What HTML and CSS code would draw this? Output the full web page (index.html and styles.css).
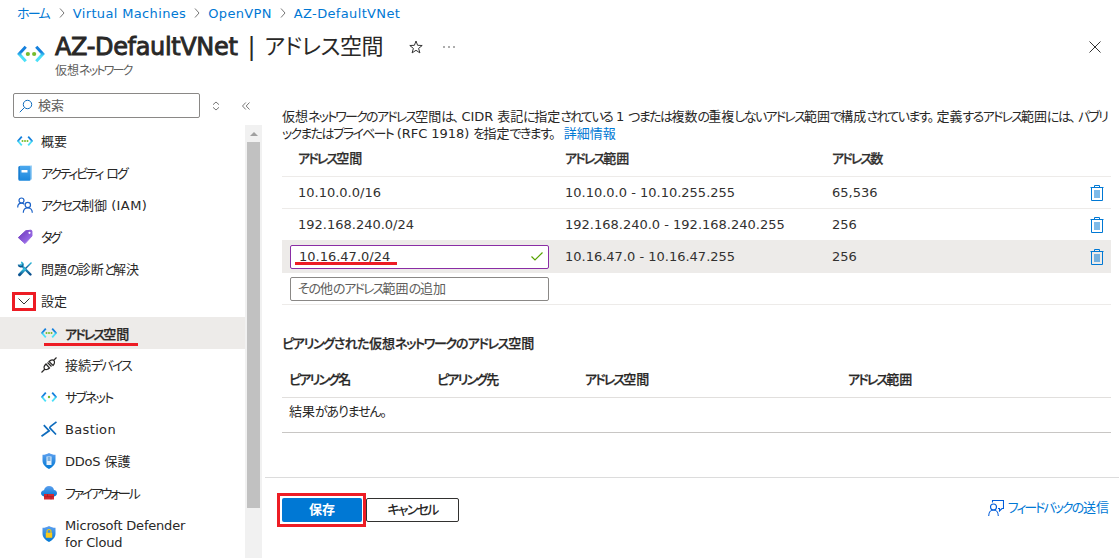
FILE: index.html
```html
<!DOCTYPE html>
<html lang="ja">

<head>
    <meta charset="UTF-8">
    <meta name="viewport" content="width=device-width, initial-scale=1">
    <title>AZ-DefaultVNet | アドレス空間</title>
    <link rel="stylesheet" href="styles.css">
</head>

<body>
    <svg class="defs" width="0" height="0">
        <defs>
            <linearGradient id="g-arrow" x1="0" y1="0" x2="0" y2="1">
                <stop offset="0.35" stop-color="#1580dd"/>
                <stop offset="0.65" stop-color="#4be0f8"/>
            </linearGradient>
            <linearGradient id="g-blue" x1="0" y1="0" x2="0" y2="1">
                <stop offset="0" stop-color="#5ea0ef"/>
                <stop offset="1" stop-color="#0078d4"/>
            </linearGradient>
            <linearGradient id="g-book" x1="0" y1="0" x2="0" y2="1">
                <stop offset="0" stop-color="#4ba8ee"/>
                <stop offset="1" stop-color="#1b87dc"/>
            </linearGradient>
            <linearGradient id="g-tool" x1="0" y1="0" x2="0" y2="1">
                <stop offset="0" stop-color="#32bedd"/>
                <stop offset="1" stop-color="#0a4e8c"/>
            </linearGradient>
            <linearGradient id="g-tag" x1="0" y1="0" x2="1" y2="1">
                <stop offset="0" stop-color="#6b35b8"/>
                <stop offset="1" stop-color="#a67af4"/>
            </linearGradient>
            <symbol id="i-vnet" viewBox="0 0 16 16">
                <path d="M4.800 3.600L1 8l3.800 4.400M11.200 3.600L15 8l-3.800 4.400" fill="none" stroke="url(#g-arrow)" stroke-width="1.800"/>
                <circle cx="5.500" cy="8" r="1" fill="#76bc2d"/>
                <circle cx="8" cy="8" r="1" fill="#76bc2d"/>
                <circle cx="10.500" cy="8" r="1" fill="#76bc2d"/>
            </symbol>
            <symbol id="i-vnet2" viewBox="0 0 16 16">
                <path d="M5 3.800L1.200 8 5 12.200M11 3.800L14.800 8 11 12.200" fill="none" stroke="url(#g-arrow)" stroke-width="1.700"/>
                <circle cx="6.200" cy="8" r="1.200" fill="#76bc2d"/>
                <circle cx="9.800" cy="8" r="1.200" fill="#76bc2d"/>
            </symbol>
            <symbol id="i-subnet" viewBox="0 0 16 16">
                <path d="M4.800 3.600L1 8l3.800 4.400M11.200 3.600L15 8l-3.800 4.400" fill="none" stroke="url(#g-arrow)" stroke-width="1.800"/>
                <circle cx="8" cy="8" r="1.200" fill="#76bc2d"/>
            </symbol>
            <symbol id="i-trash" viewBox="0 0 14 16">
                <path d="M0.5 2.500h13M4.500 2.500v-2h5v2M1.500 2.500v13h11v-13" fill="none" stroke="#0078d4"/>
                <path d="M4 5h6v8H4z" fill="#0078d4" opacity="0.5"/>
            </symbol>
        </defs>
    </svg>

    <header>
        <nav class="breadcrumb">
            <a href="#" class="home"><span class="kana">ホーム</span></a>
            <svg width="6" height="10" viewBox="0 0 6 10"><path d="M1 .5L5 5 1 9.500"/></svg>
            <a href="#" class="wide">Virtual Machines</a>
            <svg width="6" height="10" viewBox="0 0 6 10"><path d="M1 .5L5 5 1 9.500"/></svg>
            <a href="#" class="wide">OpenVPN</a>
            <svg width="6" height="10" viewBox="0 0 6 10"><path d="M1 .5L5 5 1 9.500"/></svg>
            <a href="#" class="wide">AZ-DefaultVNet</a>
        </nav>
        <div class="title-bar">
            <svg class="logo" width="28" height="28"><use href="#i-vnet2"/></svg>
            <div>
                <h1><strong>AZ-DefaultVNet</strong><span class="bar">|</span><span class="blade">アドレス空間</span></h1>
                <p class="kind">仮想<span class="kana">ネットワーク</span></p>
            </div>
            <svg class="star" width="14" height="14" viewBox="0 0 14 14"><path d="M7 1l1.600 4.300 4.600.2-3.600 2.900 1.300 4.500L7 10.300l-3.900 2.600 1.300-4.500L.8 5.500l4.600-.2z"/></svg>
            <svg class="more" width="12" height="4" viewBox="0 0 12 4"><circle cx="1" cy="2" r=".8"/><circle cx="6" cy="2" r=".8"/><circle cx="11" cy="2" r=".8"/></svg>
            <svg class="close" width="12" height="12" viewBox="0 0 12 12"><path d="M.5 .5l11 11M11.500 .5l-11 11"/></svg>
        </div>
    </header>

    <div class="layout">
        <aside>
            <div class="search-row">
                <div class="search">
                    <svg width="14" height="14" viewBox="0 0 14 14"><circle cx="8.500" cy="5.500" r="4.200"/><path d="M5.500 8.500L.8 13.200"/></svg>
                    <span>検索</span>
                </div>
                <svg class="sort" width="8" height="10" viewBox="0 0 8 10"><path d="M1 3.700L4 1l3 2.700M1 6.300L4 9l3-2.700"/></svg>
                <svg class="collapse" width="8" height="8" viewBox="0 0 8 8"><path d="M3.800 .5L.5 4l3.300 3.500M7.500 .5L4.200 4l3.300 3.500"/></svg>
            </div>

            <div class="menu-wrap">
                <ul class="menu">
                    <li><svg width="16" height="16"><use href="#i-vnet"/></svg>概要</li>
                    <li>
                        <svg width="16" height="16" viewBox="0 0 16 16"><path d="M3 .5h12v14H3z" fill="#9cd0f5"/><rect x="1.500" y="1" width="12" height="14.700" rx="1" fill="url(#g-book)"/><path d="M1.500 2v12.500h1.300V1z" fill="#1478cc"/><path d="M4.500 5h6v2.500h-6z" fill="#fff"/></svg>
                        <span><span class="small-kana">アクティビティ</span> <span class="kana">ログ</span></span>
                    </li>
                    <li>
                        <svg width="16" height="16" viewBox="0 0 16 16" fill="none" stroke="#1b62c8" stroke-width="1.200"><circle cx="4.500" cy="3.500" r="2.500"/><path d="M.7 10.500c0-2.500 1.500-4.300 3.800-4.300 1.300 0 2.200.5 2.800 1.200"/><circle cx="10.800" cy="8" r="2.700"/><path d="M6.300 15.800c0-3 1.800-5 4.500-5s4.500 2 4.500 5"/></svg>
                        <span><span class="kana">アクセス</span>制御 <span class="iam">(IAM)</span></span>
                    </li>
                    <li>
                        <svg width="16" height="16" viewBox="0 0 16 16"><path d="M8.700 1.800L13.800 1.200q1 0 1.100 1L15 7 8 14.600 1.300 8.600z" fill="url(#g-tag)" stroke="url(#g-tag)" stroke-linejoin="round"/><circle cx="12.500" cy="3.800" r="1.100" fill="#fff"/></svg>
                        <span class="small-kana">タグ</span>
                    </li>
                    <li>
                        <svg width="16" height="16" viewBox="0 0 16 16" fill="none" stroke="url(#g-tool)"><path d="M4 4l9.500 9.500" stroke-width="2.400" stroke-linecap="round"/><path d="M1.500 3.500c.5 2.500 3.500 3 4.300.8C6.300 3 5.500 1.500 4 1.300" stroke-width="1.800"/><path d="M14.500 1.500l-6 6" stroke-width="1.500"/><path d="M7.500 8.500l-5 5.200" stroke-width="3" stroke-linecap="round"/></svg>
                        <span>問題<span class="kana">の</span>診断<span class="small-kana">と</span>解決</span>
                    </li>
                    <li class="group">
                        <span class="mark-box"><svg width="12" height="7" viewBox="0 0 12 7"><path d="M.5 .5L6 6 11.500 .5"/></svg></span>
                        設定
                    </li>
                    <li class="sub active">
                        <svg width="16" height="16"><use href="#i-vnet"/></svg>
                        <b><span class="kana">アドレス</span>空間</b>
                    </li>
                    <li class="sub">
                        <svg width="16" height="16" viewBox="0 0 16 16" fill="none" stroke="#292827" stroke-width="1.200"><path d="M.5 15.500l3-3M12.500 3.500l3-3M6.500 5.500l4 4M5 7c-1.800 1.800-2.500 3.500-1.500 4.800s3.500.8 5-.8zM8 4.500c1.500-1.500 3.500-2.200 4.800-1S13.500 7 12 8.500z"/></svg>
                        <span>接続<span class="kana">デバイス</span></span>
                    </li>
                    <li class="sub"><svg width="16" height="16"><use href="#i-subnet"/></svg><span class="kana">サブネット</span></li>
                    <li class="sub">
                        <svg width="16" height="16" viewBox="0 0 16 16" fill="none" stroke="#0f6cbd" stroke-width="1.700"><path d="M.5 15.300l7.700-5.500-5.400-5.600M15.500 .8L9 5.800M15 13.500L9 7.200 8.800 5.600"/></svg>
                        <span class="wide">Bastion</span>
                    </li>
                    <li class="sub">
                        <svg width="16" height="16" viewBox="0 0 16 16"><path d="M8 0c2 1.300 4 1.700 6.500 1.800V7.500c0 4-3 6.500-6.500 8.500-3.500-2-6.500-4.500-6.500-8.500V1.800C4 1.700 6 1.300 8 0z" fill="url(#g-blue)"/><path d="M5.500 3.500h5v8.500h-5z" fill="#e6f1fb"/><path d="M6.500 5h3M6.500 7h3" stroke="#0f6cbd"/></svg>
                        <span><span class="tight">DDoS</span> 保護</span>
                    </li>
                    <li class="sub">
                        <svg width="16" height="16" viewBox="0 0 16 16"><path d="M4 11.500C1.500 11.500 0 10.200 0 8.300 0 6.500 1.300 5.300 3 5.200 3.500 2.700 5.300 1 8 1s4.500 1.500 5 4c1.800.2 3 1.500 3 3.300 0 1.900-1.500 3.200-3.500 3.200z" fill="url(#g-blue)"/><path d="M3 9h10v5.500H3z" fill="#d02a32"/><path d="M3 11.700h10M6.500 9v2.500M10 11.500v3" stroke="#a01a22" stroke-width=".6"/></svg>
                        <span class="small-kana">ファイアウォール</span>
                    </li>
                    <li class="sub two">
                        <svg width="16" height="16" viewBox="0 0 16 16"><path d="M8 0c2 1.300 4 1.700 6.500 1.800V7.500c0 4-3 6.500-6.500 8.500-3.500-2-6.500-4.500-6.500-8.500V1.800C4 1.700 6 1.300 8 0z" fill="url(#g-blue)"/><path d="M6 7V5.500a2 2 0 0 1 4 0V7" fill="none" stroke="#f2c811" stroke-width="1.200"/><rect x="4.800" y="6.800" width="6.400" height="5" rx=".6" fill="#fbc91b"/></svg>
                        <span class="tight">Microsoft Defender<br>for Cloud</span>
                    </li>
                </ul>
                <div class="scrollbar">
                    <div class="arrow-up"></div>
                    <div class="thumb"></div>
                </div>
            </div>
        </aside>

        <main>
            <section class="content">
                <p class="desc">仮想<span class="kana">ネットワーク</span><span class="hira">の</span><span class="kana">アドレス</span>空間<span class="hira">は、</span> CIDR 表記<span class="hira">に</span>指定<span class="hira">されている</span> 1 <span class="hira">つまたは</span>複数<span class="hira">の</span>重複<span class="hira">しない</span><span class="kana">アドレス</span>範囲<span class="hira">で</span>構成<span class="hira">されています。</span> 定義<span class="hira">する</span><span class="kana">アドレス</span>範囲<span class="hira">には、</span> <span class="kana">パブリ<br>ック</span><span class="hira">または</span><span class="kana">プライベート</span> (RFC 1918) <span class="hira">を</span>指定<span class="hira">できます。</span> <a href="#">詳細情報</a></p>

                <div class="table">
                    <div class="row head">
                        <b><span class="kana">アドレス</span>空間</b>
                        <b><span class="kana">アドレス</span>範囲</b>
                        <b><span class="kana">アドレス</span>数</b>
                    </div>
                    <div class="row">
                        <span>10.10.0.0/16</span><span>10.10.0.0 - 10.10.255.255</span><span>65,536</span>
                        <svg width="14" height="16"><use href="#i-trash"/></svg>
                    </div>
                    <div class="row">
                        <span>192.168.240.0/24</span><span>192.168.240.0 - 192.168.240.255</span><span>256</span>
                        <svg width="14" height="16"><use href="#i-trash"/></svg>
                    </div>
                    <div class="row editing">
                        <div class="field">
                            <span class="marked">10.16.47.0/24</span>
                            <svg width="12" height="9" viewBox="0 0 12 9"><path d="M.5 4.500L4 8 11.500 .5"/></svg>
                        </div>
                        <span>10.16.47.0 - 10.16.47.255</span><span>256</span>
                        <svg width="14" height="16"><use href="#i-trash"/></svg>
                    </div>
                    <div class="row">
                        <div class="field empty"><span><span class="hira">その</span>他<span class="hira">の</span><span class="kana">アドレス</span>範囲<span class="hira">の</span>追加</span></div>
                    </div>
                </div>

                <h2><span class="kana">ピアリング</span><span class="hira">された</span>仮想<span class="kana">ネットワーク</span><span class="hira">の</span><span class="kana">アドレス</span>空間</h2>
                <div class="peering">
                    <div class="peering-head">
                        <b><span class="kana">ピアリング</span>名</b>
                        <b><span class="kana">ピアリング</span>先</b>
                        <b><span class="kana">アドレス</span>空間</b>
                        <b><span class="kana">アドレス</span>範囲</b>
                    </div>
                    <div class="no-result">結果<span class="hira">がありません。</span></div>
                </div>
            </section>

            <footer>
                <div class="save-mark"><button class="save">保存</button></div>
                <button class="cancel"><span class="kana">キャンセル</span></button>
                <a href="#" class="feedback">
                    <svg width="16" height="16" viewBox="0 0 16 16"><circle cx="5.500" cy="7" r="3"/><path d="M.7 16c0-3.500 2-6 4.800-6s4.800 2.500 4.800 6M4.500 2.500v-2h11v8h-1.500l-2.500 2.500V8.500h-1.500"/></svg>
                    <span><span class="kana">フィードバック</span><span class="hira">の</span>送信</span>
                </a>
            </footer>
        </main>
    </div>
</body>

</html>
```
FILE: styles.css
```css
* {
    box-sizing: border-box;
}

body {
    margin: 0;
    height: 558px;
    overflow: hidden;
    display: flex;
    flex-direction: column;
    background: #fff;
    font: 13px/17px "DejaVu Sans", "Noto Sans CJK JP", sans-serif;
    font-feature-settings: "palt";
    color: #292827;
}

.defs {
    position: absolute;
}

svg {
    flex: none;
    display: block;
}

a {
    color: #0078d4;
    text-decoration: none;
}

b,
h2 {
    font-family: "Noto Sans CJK JP", sans-serif;
    font-weight: 500;
    -webkit-text-stroke: 0.25px #292827;
}

/* kana are set narrower than kanji */
.kana {
    letter-spacing: -1.8px;
}

.small-kana {
    letter-spacing: -2.3px;
}

.hira {
    letter-spacing: -1.2px;
}

.wide {
    letter-spacing: 0.35px;
}

.tight {
    letter-spacing: -0.2px;
}

/* header */
header {
    height: 84px;
    padding: 4px 18px 0 17px;
}

.breadcrumb {
    display: flex;
    align-items: center;
    height: 18px;
    gap: 8px;
}

.breadcrumb svg path {
    fill: none;
    stroke: #777;
}

.home {
    margin-right: 2px;
}

.title-bar {
    display: flex;
    padding-top: 9px;
}

.logo {
    margin: 9px 10px 0 0;
}

h1 {
    display: flex;
    margin: 0;
    font-size: 24px;
    line-height: 32px;
    font-weight: normal;
}

h1 strong {
    font-weight: normal;
    letter-spacing: -0.35px;
    -webkit-text-stroke: 0.9px #292827;
}

.bar {
    margin: 0 9px 0 10px;
}

.blade {
    font-size: 22px;
    letter-spacing: -0.4px;
}

.kind {
    margin: 0;
    font-size: 12px;
    line-height: 17px;
    color: #605e5c;
}

.star {
    margin: 9px 0 0 26px;
    fill: none;
    stroke: #333;
}

.more {
    margin: 14px 0 0 20px;
    fill: #444;
}

.close {
    margin: 10px 0 0 auto;
    stroke: #333;
}

/* side menu */
.layout {
    flex: 1;
    display: flex;
    min-height: 0;
}

aside {
    width: 262px;
    display: flex;
    flex-direction: column;
}

.search-row {
    display: flex;
    align-items: center;
    padding: 9px 0 0 13px;
}

.search {
    display: flex;
    align-items: center;
    gap: 5px;
    width: 187px;
    height: 25px;
    padding-left: 5px;
    border: 1px solid #8a8886;
    border-radius: 2px;
    color: #605e5c;
}

.search svg {
    fill: none;
    stroke: #0f6cbd;
}

.sort,
.collapse {
    fill: none;
    stroke: #777;
}

.sort {
    margin-left: 12px;
}

.collapse {
    margin-left: 22px;
}

.menu-wrap {
    flex: 1;
    display: flex;
    min-height: 0;
    margin-top: 7px;
}

.menu {
    flex: 1;
    margin: 0;
    padding: 0;
    list-style: none;
}

.menu li {
    display: flex;
    align-items: center;
    gap: 8px;
    height: 32px;
    padding-left: 17px;
}

.menu li.sub {
    padding-left: 41px;
}

.menu li.active {
    position: relative;
    background: #edebe9;
}

.menu li.active::after {
    content: "";
    position: absolute;
    left: 44px;
    bottom: 3px;
    width: 94px;
    height: 3px;
    background: #ed1c24;
}

.menu li.group {
    padding-left: 12px;
    gap: 5px;
}

.menu li.two {
    height: 50px;
}

.iam {
    letter-spacing: 0.4px;
}

.mark-box {
    display: flex;
    align-items: center;
    justify-content: center;
    width: 24px;
    height: 19px;
    border: 3px solid #ed1c24;
}

.mark-box svg {
    fill: none;
    stroke: #333;
}

.scrollbar {
    width: 17px;
    padding: 7px 2px 0;
    background: #f1f1f1;
}

.arrow-up {
    width: 0;
    margin: 0 auto 6px;
    border: 4px solid transparent;
    border-top: 0;
    border-bottom-color: #a0a0a0;
}

.thumb {
    height: 366px;
    background: #c1c1c1;
}

/* content */
main {
    flex: 1;
    display: flex;
    flex-direction: column;
    padding-left: 3px;
}

.content {
    height: 393px;
    padding: 24px 8px 0 17px;
}

.desc {
    margin: 0;
    white-space: nowrap;
    word-spacing: -0.3px;
}

.desc .hira {
    letter-spacing: -1.6px;
}

.desc a {
    margin-left: 6px;
}

.row {
    display: grid;
    grid-template-columns: 267px 267px 1fr 21px;
    align-items: center;
    height: 32px;
    padding-left: 16px;
    border-bottom: 1px solid #edebe9;
    color: #323130;
}

.row.head {
    height: 35px;
    padding-bottom: 3px;
}

.row.editing {
    background: #edebe9;
}

.field {
    display: flex;
    align-items: center;
    justify-content: space-between;
    width: 259px;
    height: 24px;
    margin-left: -8px;
    padding: 0 5px 0 8px;
    border: 1px solid #8a2da5;
    border-radius: 2px;
    background: #fff;
}

.field svg {
    fill: none;
    stroke: #57a300;
    stroke-width: 1.2;
}

.field.empty {
    border-color: #8a8886;
    padding-left: 7px;
    color: #605e5c;
}

.marked {
    position: relative;
}

.marked::after {
    content: "";
    position: absolute;
    left: -4px;
    bottom: 0;
    width: 102px;
    height: 3px;
    background: #ed1c24;
}

h2 {
    margin: 28px 0 0;
    font-size: 13px;
    line-height: 19px;
}

h2 .kana {
    letter-spacing: -1.3px;
}

h2 .hira {
    letter-spacing: -0.6px;
}

.peering {
    margin-top: 9px;
    border-bottom: 1px solid #c8c6c4;
}

.peering-head {
    display: grid;
    grid-template-columns: 148px 148px 263px 1fr;
    align-items: center;
    height: 37px;
    padding: 0 0 2px 7px;
    border-bottom: 1px solid #e1dfdd;
}

.no-result {
    height: 34px;
    padding: 5px 7px;
}

footer {
    flex: 1;
    display: flex;
    align-items: flex-start;
    padding: 15px 10px 0 12px;
    border-top: 1px solid #dcdcdc;
}

.save-mark {
    width: 89px;
    height: 34px;
    padding: 2px;
    border: 3px solid #ed1c24;
}

button {
    height: 24px;
    padding: 0 0 2px;
    border-radius: 2px;
    font: 500 13px/20px "Noto Sans CJK JP", sans-serif;
    font-feature-settings: "palt";
}

.save {
    display: block;
    width: 80px;
    border: 0;
    background: #0078d4;
    color: #fff;
    font-weight: 700;
}

.cancel {
    width: 93px;
    margin-top: 5px;
    border: 1px solid #323130;
    background: #fff;
    color: #292827;
}

.feedback {
    display: flex;
    align-items: center;
    gap: 4px;
    margin: 6px 0 0 auto;
}

.feedback svg {
    fill: none;
    stroke: #015cda;
    stroke-width: 1.1;
}

.feedback .kana {
    letter-spacing: -2px;
}
```
